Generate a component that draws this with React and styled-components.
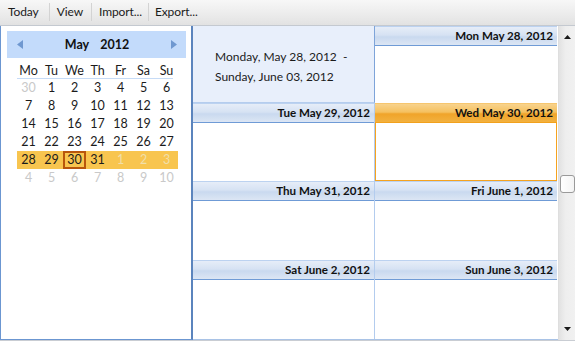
import React from "react";
import styled, { createGlobalStyle, css } from "styled-components";

const Global = createGlobalStyle`
  html, body { margin: 0; padding: 0; background: #fff; }
  body { font-family: Lato, "Open Sans", sans-serif; font-size: 12px; color: #1b1b1b; }
  * { box-sizing: border-box; }
`;

const Frame = styled.div`
  width: 575px;
  height: 341px;
  display: flex;
  flex-direction: column;
  overflow: hidden;
  background: #fff;
  border-bottom: 1px solid #c9cdd3;
`;

const Toolbar = styled.div`
  height: 26px;
  flex: none;
  display: flex;
  align-items: center;
  padding-bottom: 1px;
  background: linear-gradient(#f7f7f7, #ebebeb 60%, #e2e2e2);
  border-bottom: 1px solid #c4c9d0;
`;

const ToolButton = styled.div`
  padding: 0 ${p => p.$pr}px 0 ${p => p.$pl}px;
  height: 18px;
  line-height: 18px;
  font-size: 12px;
  letter-spacing: -0.1px;
  color: #1b1b1b;
  border-left: ${p => (p.$first ? "none" : "1px solid #d3d3d3")};
`;

const Main = styled.div`
  flex: 1;
  display: flex;
  min-height: 0;
`;

const Side = styled.div`
  width: 193px;
  flex: none;
  border-left: 1px solid #6b96d1;
  border-right: 2px solid #5b84bd;
  border-bottom: 1px solid #6b96d1;
  padding: 5px 5px 0 6px;
  background: #fff;
`;

const CalHeader = styled.div`
  height: 27px;
  background: #c3dbfb;
  display: flex;
  align-items: center;
  justify-content: space-between;
  padding: 0 9px 0 10px;
`;

const MonthTitle = styled.div`
  font-weight: bold;
  font-size: 12.5px;
  display: flex;
  gap: 11px;
  color: #111;
`;

const Arrow = styled.svg`
  width: 6px;
  height: 9px;
  display: block;
`;

const CalGrid = styled.div`
  margin: 4px 0 0 10px;
  width: 161px;
  display: grid;
  grid-template-columns: repeat(7, 23px);
`;

const DayName = styled.div`
  height: 17px;
  padding-top: 2px;
  line-height: 14px;
  text-align: center;
  font-size: 12.5px;
  color: #1b1b1b;
  border-bottom: 1px solid #c6dbf6;
  ${p => p.$last && css`border-image: linear-gradient(to right, #c6dbf6 17px, transparent 17px) 1;`}
`;

const DayCell = styled.div`
  height: 18px;
  line-height: 16px;
  text-align: center;
  font-size: 12.5px;
  color: ${p => (p.$other ? (p.$sel ? "#f1dfa9" : "#c9c9c9") : "#1b1b1b")};
  background: ${p => (p.$sel ? "#f8c54f" : "transparent")};
  border: 1px solid ${p => (p.$today ? "#b8560c" : "transparent")};
  ${p => p.$today && css`border-width: 2px; line-height: 14px;`}
`;

const Sched = styled.div`
  flex: 1;
  display: flex;
  min-width: 0;
`;

const Grid = styled.div`
  flex: 1;
  display: grid;
  grid-template-columns: 182px 183px;
  grid-template-rows: 77px 78px 79px 79px;
  border-bottom: 1px solid #a9c3e6;
`;

const RangeCell = styled.div`
  background: #e8effb;
  border-right: 1px solid #7ea4d9;
  border-bottom: 1px solid #b5cdee;
  padding: 21px 0 0 22px;
  font-size: 12px;
  line-height: 20px;
  color: #1b1b1b;
  white-space: pre;
`;

const Day = styled.div`
  display: flex;
  flex-direction: column;
  border-right: 1px solid ${p => (p.$left ? "#b3ccee" : "transparent")};
`;

const DayHead = styled.div`
  height: 20px;
  flex: none;
  text-align: right;
  padding-right: 4px;
  font-weight: bold;
  font-size: 11.6px;
  line-height: 18px;
  color: #111;
  ${p =>
    p.$active
      ? css`
          background: linear-gradient(#f8d38d, #f5c160 45%, #f0a42a 55%, #f2b13f);
          border-top: 1px solid #f6c66f;
          border-bottom: 1px solid #f2a11c;
        `
      : css`
          background: linear-gradient(#e6edf8, #d6e2f3 45%, #c9d9ef 55%, #dce6f4);
          border-top: 1px solid #bcd2f0;
          border-bottom: 1px solid #6f9bd6;
        `}
`;

const DayBody = styled.div`
  flex: 1;
  background: #fff;
  border: 1px solid ${p => (p.$active ? "#f5a31f" : "transparent")};
  ${p => p.$active && css`border-top: none;`}
`;

const Scrollbar = styled.div`
  width: 17px;
  flex: none;
  display: flex;
  flex-direction: column;
  align-items: center;
  background: linear-gradient(to right, #e2e2e2, #eeeeee 40%, #f1f1f1);
  border-left: 1px solid #dedede;
`;

const ScrollBtn = styled.div`
  height: 22px;
  display: flex;
  align-items: center;
  justify-content: center;
  width: 100%;
`;

const Track = styled.div`
  flex: 1;
  width: 100%;
  display: flex;
  flex-direction: column;
  align-items: center;
  padding-top: 127px;
`;

const Thumb = styled.div`
  width: 15px;
  height: 18px;
  border: 1px solid #9a9a9a;
  border-radius: 3px;
  background: linear-gradient(to right, #ffffff, #f4f4f4);
`;

const Tri = ({ dir, color = "#1a1a1a", w = 7, h = 4 }) => (
  <svg width={w} height={h} viewBox="0 0 7 4" style={{ display: "block" }}>
    {dir === "up" ? (
      <polygon points="0,4 7,4 3.5,0" fill={color} />
    ) : (
      <polygon points="0,0 7,0 3.5,4" fill={color} />
    )}
  </svg>
);

const names = ["Mo", "Tu", "We", "Th", "Fr", "Sa", "Su"];
const weeks = [
  [30, 1, 2, 3, 4, 5, 6],
  [7, 8, 9, 10, 11, 12, 13],
  [14, 15, 16, 17, 18, 19, 20],
  [21, 22, 23, 24, 25, 26, 27],
  [28, 29, 30, 31, 1, 2, 3],
  [4, 5, 6, 7, 8, 9, 10],
];

const days = [
  { label: "Tue May 29, 2012", left: true },
  { label: "Wed May 30, 2012", active: true },
  { label: "Thu May 31, 2012", left: true },
  { label: "Fri June 1, 2012" },
  { label: "Sat June 2, 2012", left: true },
  { label: "Sun June 3, 2012" },
];

const tools = [
  { label: "Today", pl: 8, pr: 10 },
  { label: "View", pl: 7, pr: 8 },
  { label: "Import...", pl: 7, pr: 6 },
  { label: "Export...", pl: 6, pr: 6 },
];

export default function App() {
  return (
    <>
      <Global />
      <Frame>
        <Toolbar>
          {tools.map((t, i) => (
            <ToolButton key={t.label} $first={i === 0} $pl={t.pl} $pr={t.pr}>
              {t.label}
            </ToolButton>
          ))}
        </Toolbar>
        <Main>
          <Side>
            <CalHeader>
              <Arrow viewBox="0 0 6 9">
                <polygon points="6,0 6,9 0,4.5" fill="#6f98d0" />
              </Arrow>
              <MonthTitle>
                <span>May</span>
                <span>2012</span>
              </MonthTitle>
              <Arrow viewBox="0 0 6 9">
                <polygon points="0,0 0,9 6,4.5" fill="#6f98d0" />
              </Arrow>
            </CalHeader>
            <CalGrid>
              {names.map((n, i) => (
                <DayName key={n} $last={i === 6}>{n}</DayName>
              ))}
              {weeks.map((w, wi) =>
                w.map((d, di) => {
                  const other = (wi === 0 && d > 20) || (wi >= 4 && d < 15);
                  return (
                    <DayCell
                      key={wi + "-" + di}
                      $other={other}
                      $sel={wi === 4}
                      $today={wi === 4 && d === 30}
                    >
                      {d}
                    </DayCell>
                  );
                })
              )}
            </CalGrid>
          </Side>
          <Sched>
            <Grid>
              <RangeCell>{"Monday, May 28, 2012  -\nSunday, June 03, 2012"}</RangeCell>
              <Day>
                <DayHead>Mon May 28, 2012</DayHead>
                <DayBody />
              </Day>
              {days.map(d => (
                <Day key={d.label} $left={d.left}>
                  <DayHead $active={d.active}>{d.label}</DayHead>
                  <DayBody $active={d.active} />
                </Day>
              ))}
            </Grid>
            <Scrollbar>
              <ScrollBtn>
                <Tri dir="up" />
              </ScrollBtn>
              <Track>
                <Thumb />
              </Track>
              <ScrollBtn>
                <Tri dir="down" />
              </ScrollBtn>
            </Scrollbar>
          </Sched>
        </Main>
      </Frame>
    </>
  );
}
